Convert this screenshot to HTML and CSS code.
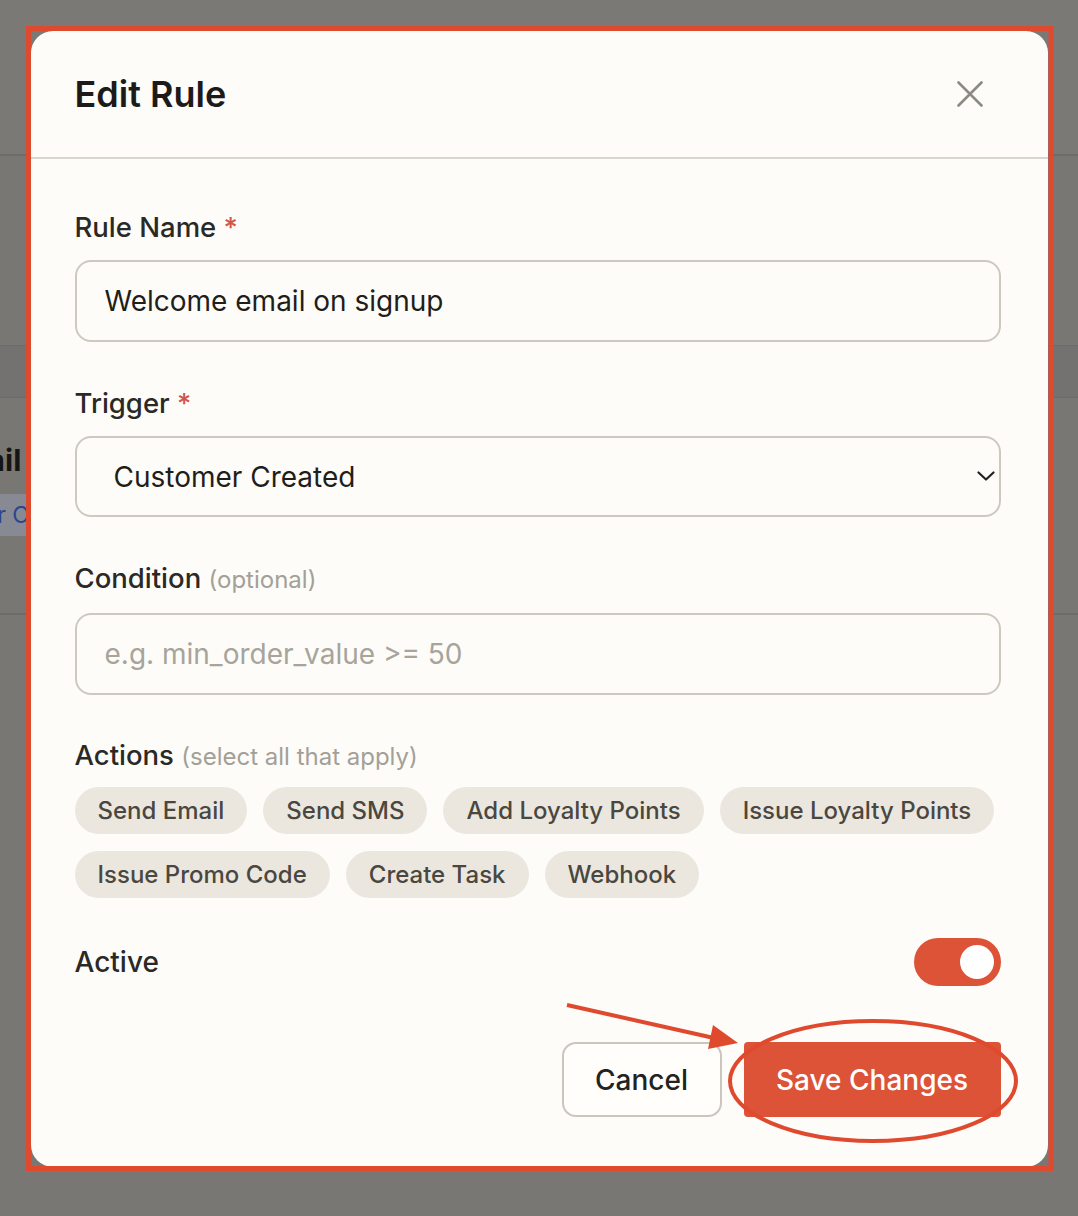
FILE: index.html
```html
<!DOCTYPE html>
<html lang="en">
<head>
    <meta charset="UTF-8">
    <meta name="viewport" content="width=device-width, initial-scale=1.0">
    <title>Automation Rules</title>
    <link rel="stylesheet" href="styles.css">
</head>
<body>
    <!-- page underneath the dialog (dimmed) -->
    <div class="page">
        <div class="page-head"></div>
        <div class="rules-table">
            <div class="table-head"></div>
            <div class="table-row">
                <div class="row-title">Email (new signup)</div>
                <span class="row-chip">Customer Created</span>
            </div>
        </div>
    </div>

    <div class="overlay">
        <div class="modal">
            <div class="modal-head">
                <h2>Edit Rule</h2>
                <button class="close-btn" aria-label="Close">
                    <svg width="26" height="26" viewBox="0 0 26 26">
                        <path d="M1.5 1.5 L24.5 24.5 M24.5 1.5 L1.5 24.5" stroke="#8c8a82" stroke-width="2.6" stroke-linecap="round" fill="none"/>
                    </svg>
                </button>
            </div>

            <div class="modal-body">
                <div class="field">
                    <label for="ruleName">Rule Name <span class="req">*</span></label>
                    <input type="text" id="ruleName" value="Welcome email on signup">
                </div>

                <div class="field">
                    <label for="trigger">Trigger <span class="req">*</span></label>
                    <div class="select-wrap">
                        <select id="trigger">
                            <option>Customer Created</option>
                            <option>Order Placed</option>
                            <option>Cart Abandoned</option>
                        </select>
                        <svg class="chevron" width="18" height="10" viewBox="0 0 18 10">
                            <path d="M1.5 1.5 L9 8.5 L16.5 1.5" stroke="#222" stroke-width="2.2" fill="none" stroke-linecap="round" stroke-linejoin="round"/>
                        </svg>
                    </div>
                </div>

                <div class="field">
                    <label for="condition">Condition <span class="hint">(optional)</span></label>
                    <input type="text" id="condition" placeholder="e.g. min_order_value >= 50">
                </div>

                <div class="field actions">
                    <label>Actions <span class="hint">(select all that apply)</span></label>
                    <div class="chips">
                        <span class="chip">Send Email</span>
                        <span class="chip">Send SMS</span>
                        <span class="chip">Add Loyalty Points</span>
                        <span class="chip">Issue Loyalty Points</span>
                        <span class="chip">Issue Promo Code</span>
                        <span class="chip">Create Task</span>
                        <span class="chip">Webhook</span>
                    </div>
                </div>

                <div class="active-row">
                    <span>Active</span>
                    <span class="toggle on"><span class="knob"></span></span>
                </div>

                <div class="modal-foot">
                    <button class="btn btn-cancel">Cancel</button>
                    <button class="btn btn-save">Save Changes</button>
                </div>
            </div>
        </div>
    </div>

    <!-- review markup drawn on top -->
    <svg class="markup" width="1078" height="1216" viewBox="0 0 1078 1216">
        <rect x="28.5" y="28.5" width="1022.5" height="1140" fill="none" stroke="#df4a2f" stroke-width="5"/>
        <ellipse cx="873" cy="1081" rx="143" ry="60" fill="none" stroke="#df4a2f" stroke-width="4"/>
        <line x1="567" y1="1005" x2="714" y2="1038" stroke="#df4a2f" stroke-width="4"/>
        <polygon points="738,1043 713,1025 708,1049" fill="#df4a2f"/>
    </svg>
</body>
</html>
```

FILE: styles.css
```css
* {
    box-sizing: border-box;
}
html, body {
    margin: 0;
    height: 100%;
}
body {
    font-family: Inter, "Noto Sans", sans-serif;
    background-color: #797774;
    color: #1f1e1b;
    overflow: hidden;
}

/* dimmed page behind the dialog */
.page-head {
    height: 156px;
    background-color: #7b7976;
    border-bottom: 2px solid #6e6c69;
}
.rules-table {
    margin-top: 189px;
}
.table-head {
    height: 53px;
    background-color: #747270;
    border-top: 1px solid #6e6c69;
    border-bottom: 1px solid #6e6c69;
}
.table-row {
    height: 217px;
    padding-top: 44px;
    border-bottom: 2px solid #6e6c69;
}
.row-title {
    margin-left: -58px;
    font-size: 30px;
    font-weight: 700;
    color: #151515;
    white-space: nowrap;
}
.row-chip {
    display: inline-block;
    margin-left: -114px;
    margin-top: 16px;
    padding: 7px 14px;
    background-color: #878a92;
    color: #2c4590;
    font-size: 23px;
    white-space: nowrap;
}

/* dialog */
.overlay {
    position: fixed;
    inset: 0;
    display: flex;
    justify-content: center;
    align-items: flex-start;
    padding-top: 31px;
}
.modal {
    width: 1017px;
    background-color: #fdfcf8;
    border-radius: 22px;
}
.modal-head {
    height: 128px;
    display: flex;
    align-items: center;
    justify-content: space-between;
    padding: 0 47px 0 44px;
    border-bottom: 2px solid #d9d6cd;
}
.modal-head h2 {
    margin: 0;
    font-size: 36px;
    font-weight: 600;
    color: #1c1b19;
}
.close-btn {
    width: 40px;
    height: 40px;
    margin-right: 11px;
    padding: 0;
    border: none;
    background: none;
    display: flex;
    align-items: center;
    justify-content: center;
    cursor: pointer;
}
.modal-body {
    padding: 51px 47px 50px 44px;
}

.field + .field {
    margin-top: 44px;
}
.field.actions {
    margin-top: 43px;
}
label {
    display: block;
    font-size: 27.5px;
    font-weight: 500;
    line-height: 34px;
    color: #2a2926;
    margin-bottom: 16px;
}
.actions label {
    margin-bottom: 13px;
}
.req {
    color: #d0574a;
}
.hint {
    font-size: 24px;
    font-weight: 400;
    color: #a3a097;
}
input, select {
    display: block;
    width: 100%;
    height: 82px;
    padding: 0 28px;
    font-family: inherit;
    font-size: 28px;
    color: #1f1e1b;
    background-color: #fdfcf8;
    border: 2px solid #cdc9c0;
    border-radius: 16px;
    outline: none;
}
input::placeholder {
    color: #a7a49b;
}
.select-wrap {
    position: relative;
}
select {
    height: 81px;
    appearance: none;
    padding-left: 37px;
}
.chevron {
    position: absolute;
    right: 6px;
    top: 35px;
    pointer-events: none;
}

.chips {
    display: flex;
    flex-wrap: wrap;
    gap: 17px 16px;
}
.chip {
    height: 47px;
    padding: 0 23px;
    display: inline-flex;
    align-items: center;
    border-radius: 24px;
    background-color: #ebe7df;
    color: #4a4740;
    font-size: 24px;
    font-weight: 500;
    white-space: nowrap;
}

.active-row {
    margin-top: 40px;
    display: flex;
    align-items: center;
    justify-content: space-between;
    font-size: 28px;
    font-weight: 500;
    color: #2a2926;
}
.toggle {
    position: relative;
    width: 87px;
    height: 48px;
    border-radius: 24px;
    background-color: #cfcbc2;
}
.toggle.on {
    background-color: #dc5337;
}
.knob {
    position: absolute;
    top: 7px;
    left: 7px;
    width: 34px;
    height: 34px;
    border-radius: 50%;
    background-color: #fff;
}
.toggle.on .knob {
    left: auto;
    right: 7px;
}

.modal-foot {
    margin-top: 56px;
    display: flex;
    justify-content: flex-end;
    gap: 22px;
}
.btn {
    height: 75px;
    font-family: inherit;
    font-size: 28px;
    font-weight: 500;
    cursor: pointer;
}
.btn-cancel {
    width: 160px;
    background-color: #fffefb;
    color: #222;
    border: 2px solid #cac6bd;
    border-radius: 14px;
}
.btn-save {
    width: 257px;
    background-color: #dc5338;
    color: #fff;
    border: none;
    border-radius: 4px;
}

.markup {
    position: fixed;
    top: 0;
    left: 0;
    pointer-events: none;
}
```
